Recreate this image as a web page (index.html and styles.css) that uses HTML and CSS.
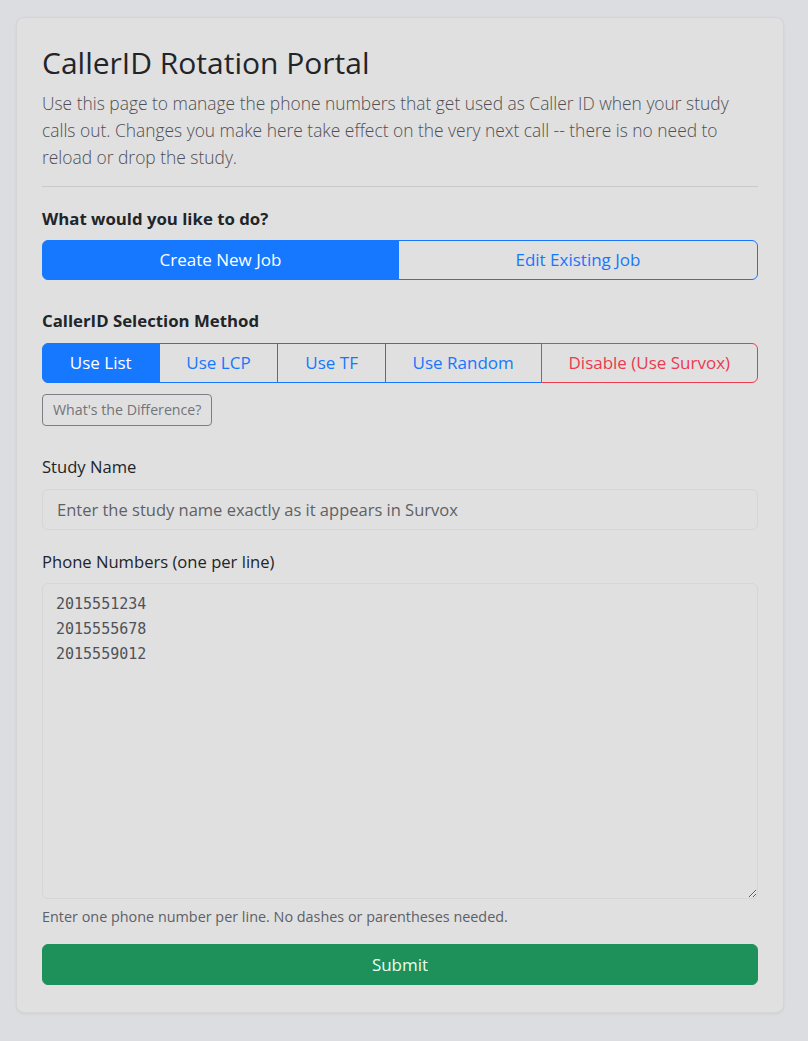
FILE: index.html
```html
<!DOCTYPE html>
<html lang="en">
<head>
<meta charset="utf-8">
<title>CallerID Rotation Portal</title>
<link rel="stylesheet" href="styles.css">
</head>
<body>
<main class="card">
  <h1 class="title">CallerID Rotation Portal</h1>
  <p class="lead">Use this page to manage the phone numbers that get used as Caller ID when your study calls out. Changes you make here take effect on the very next call -- there is no need to reload or drop the study.</p>
  <hr class="divider">

  <div class="section-label">What would you like to do?</div>
  <div class="btn-group">
    <button class="btn btn-blue active">Create New Job</button>
    <button class="btn btn-blue">Edit Existing Job</button>
  </div>

  <div class="section-label method-label">CallerID Selection Method</div>
  <div class="btn-group">
    <button class="btn btn-blue active">Use List</button>
    <button class="btn btn-blue">Use LCP</button>
    <button class="btn btn-blue">Use TF</button>
    <button class="btn btn-blue">Use Random</button>
    <button class="btn btn-red">Disable (Use Survox)</button>
  </div>
  <div class="diff-row">
    <button class="btn-small">What's the Difference?</button>
  </div>

  <label class="field-label study-label" for="study">Study Name</label>
  <input id="study" class="input" type="text" placeholder="Enter the study name exactly as it appears in Survox">

  <label class="field-label phone-label" for="phones">Phone Numbers (one per line)</label>
  <textarea id="phones" class="textarea">2015551234
2015555678
2015559012</textarea>
  <div class="help">Enter one phone number per line. No dashes or parentheses needed.</div>

  <button class="btn-submit">Submit</button>
</main>
</body>
</html>
```

FILE: styles.css
```css
* { box-sizing: border-box; }

html, body {
  margin: 0;
  padding: 0;
}

body {
  background: #dcdde0;
  font-family: "Open Sans", "Noto Sans", "Liberation Sans", sans-serif;
  color: #212529;
  font-size: 17px;
  line-height: 1.5;
  padding: 16px 24px 26px 16px;
}

.card {
  display: flex;
  flex-direction: column;
  background: #e0e0e0;
  border: 1px solid #d5d5d6;
  border-radius: 8px;
  box-shadow: 0 1px 3px rgba(0,0,0,0.06);
  padding: 26px 25px 27px 25px;
  width: 768px;
  margin-top: 1px;
}

.title {
  margin: 0 0 8px;
  font-size: 30px;
  line-height: 38px;
  font-weight: 500;
  color: #212529;
}

.lead {
  margin: 0;
  font-size: 17.4px;
  line-height: 27px;
  font-weight: 300;
  color: #4f4f55;
}

.divider {
  border: 0;
  border-top: 1px solid #c9c9cb;
  margin: 15px 0 19px;
  width: 100%;
}

.section-label {
  font-weight: 700;
  font-size: 16.8px;
  line-height: 26px;
  margin-bottom: 8px;
  color: #212529;
}

.method-label {
  margin-top: 28px;
  margin-bottom: 9px;
}

.btn-group {
  display: flex;
  width: 100%;
}

.btn {
  flex: 1 1 auto;
  font-family: inherit;
  font-size: 17px;
  font-weight: 400;
  line-height: 24px;
  padding: 7px 12px;
  background: transparent;
  border: 1px solid #1677ff;
  color: #1677ff;
  margin-left: -1px;
  border-radius: 0;
  white-space: nowrap;
}

.btn:first-child {
  margin-left: 0;
  border-top-left-radius: 6px;
  border-bottom-left-radius: 6px;
}

.btn:last-child {
  border-top-right-radius: 6px;
  border-bottom-right-radius: 6px;
}

.btn-blue.active {
  background: #1677ff;
  color: #ffffff;
}

.btn-red {
  border-color: #ec3a4f;
  color: #ec3a4f;
  position: relative;
}

.diff-row {
  display: flex;
  margin-top: 11px;
}

.btn-small {
  font-family: inherit;
  font-size: 14.2px;
  line-height: 20px;
  padding: 5px 10px;
  background: transparent;
  border: 1px solid #7b7f85;
  border-radius: 4px;
  color: #70757b;
}

.field-label {
  font-size: 16.6px;
  line-height: 26px;
  margin-bottom: 9px;
  color: #212529;
}

.study-label { margin-top: 28px; }

.phone-label {
  margin-top: 19px;
  margin-bottom: 8px;
}

.input {
  width: 100%;
  height: 41px;
  font-family: inherit;
  font-size: 16.5px;
  padding: 6px 14px;
  background: #e0e0e0;
  border: 1px solid #d6d6d8;
  border-radius: 6px;
  color: #212529;
}

.input::placeholder {
  color: #5f6066;
  opacity: 1;
}

.textarea {
  width: 100%;
  height: 316px;
  font-family: "DejaVu Sans Mono", "Liberation Mono", monospace;
  font-size: 15px;
  line-height: 25px;
  padding: 8px 13px;
  background: #e0e0e0;
  border: 1px solid #d6d6d8;
  border-radius: 6px;
  color: #505258;
  resize: vertical;
}

.help {
  margin-top: 7px;
  font-size: 14.4px;
  line-height: 21px;
  color: #5d6168;
}

.btn-submit {
  margin-top: 17px;
  width: 100%;
  height: 41px;
  font-family: inherit;
  font-size: 17px;
  font-weight: 400;
  background: #1e915a;
  border: 1px solid #1e915a;
  border-radius: 6px;
  color: #eafff2;
}
```
